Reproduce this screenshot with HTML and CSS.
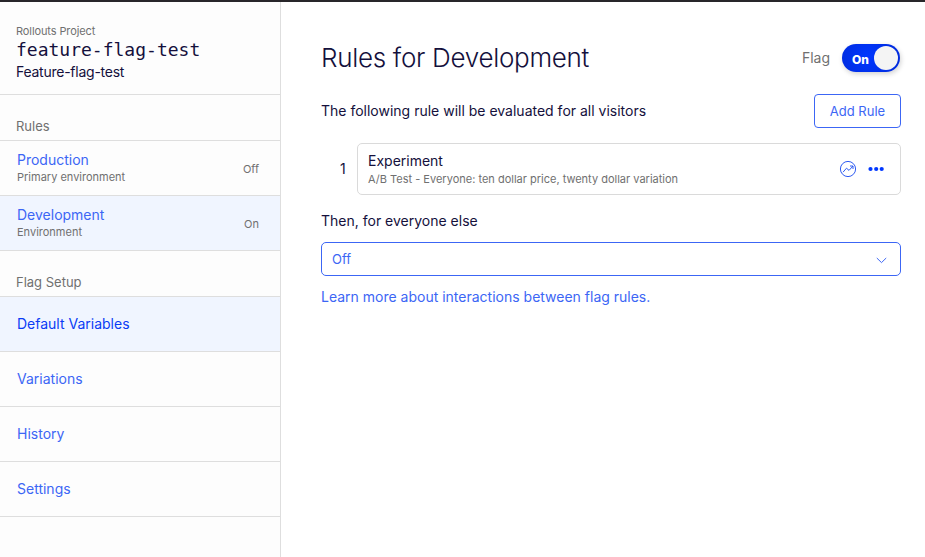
FILE: index.html
```html
<!DOCTYPE html>
<html lang="en">
<head>
<meta charset="utf-8">
<title>Rules for Development</title>
<link rel="stylesheet" href="styles.css">
</head>
<body>
<div class="app">
  <aside class="sidebar">
    <header class="project">
      <div class="project-label">Rollouts Project</div>
      <div class="flag-key">feature-flag-test</div>
      <div class="flag-name">Feature-flag-test</div>
    </header>
    <h2 class="section section-rules">Rules</h2>
    <a class="row">
      <span class="env"><span class="env-name">Production</span><span class="env-note note-primary">Primary environment</span></span>
      <span class="state">Off</span>
    </a>
    <a class="row selected">
      <span class="env"><span class="env-name env-dev">Development</span><span class="env-note">Environment</span></span>
      <span class="state">On</span>
    </a>
    <h2 class="section">Flag Setup</h2>
    <a class="row selected current"><span class="item-defaults">Default Variables</span></a>
    <a class="row"><span>Variations</span></a>
    <a class="row"><span>History</span></a>
    <a class="row"><span>Settings</span></a>
  </aside>
  <main class="main">
    <div class="title-bar">
      <h1><span class="title">Rules for Development</span></h1>
      <span class="toggle-label">Flag</span>
      <span class="toggle"><span class="toggle-text">On</span><span class="knob"></span></span>
    </div>
    <div class="intro">
      <span class="intro-text">The following rule will be evaluated for all visitors</span>
      <button class="add">Add Rule</button>
    </div>
    <div class="rule">
      <span class="number">1</span>
      <div class="card">
        <div class="card-text">
          <div class="card-title"><span>Experiment</span></div>
          <div class="card-note"><span>A/B Test - Everyone: ten dollar price, twenty dollar variation</span></div>
        </div>
        <svg class="results" width="18" height="18" viewBox="0 0 18 18" fill="none" stroke="#2f5cf2">
          <circle cx="9" cy="9" r="7.6"/>
          <path d="M4 12.2 7.5 8.2 10 10.4 14 6M11 6h3v3"/>
        </svg>
        <svg class="more" width="16" height="6" viewBox="0 0 16 6" fill="#0037ff">
          <circle cx="2.5" cy="3" r="2.1"/><circle cx="8.2" cy="3" r="2.1"/><circle cx="13.7" cy="3" r="2.1"/>
        </svg>
      </div>
    </div>
    <div class="else"><span>Then, for everyone else</span></div>
    <div class="select">
      <span>Off</span>
      <svg width="11" height="7" viewBox="0 0 11 7" fill="none" stroke="#3c66f5"><path d="M.8 1 5.5 5.6 10.2 1"/></svg>
    </div>
    <a class="learn"><span>Learn more about interactions between flag rules.</span></a>
  </main>
</div>
</body>
</html>
```
FILE: styles.css
```css
* { box-sizing: border-box; }

body {
  margin: 0;
  background: #fff;
  color: #14103c;
  font: 14px/20px Inter, "Liberation Sans", sans-serif;
}

.app {
  display: flex;
  height: 557px;
  border-top: 2px solid #28262a;
  overflow: hidden;
}

.sidebar {
  width: 281px;
  flex: none;
  background: #fdfdfd;
  border-right: 1px solid #dedede;
}

.project {
  height: 93px;
  padding: 21px 16px 0;
  border-bottom: 1px solid #dedede;
}

.project-label { font-size: 11px; line-height: 16px; color: #707070; letter-spacing: -.1px; }
.flag-key { font: 18px/22px "DejaVu Sans Mono", monospace; }
.flag-name { font-size: 14px; line-height: 22px; letter-spacing: -.25px; }

.section {
  margin: 0;
  height: 46px;
  padding: 21px 16px 0;
  border-bottom: 1px solid #dedede;
  color: #707070;
  font-size: 13px;
  font-weight: 400;
  line-height: 20px;
}

.row {
  display: flex;
  align-items: center;
  justify-content: space-between;
  height: 55px;
  padding: 0 21px 0 17px;
  border-bottom: 1px solid #dedede;
  color: #3c66f5;
}

.selected { background: #f0f5ff; }
.current { color: #0a3cf5; }
.env { display: flex; flex-direction: column; }
.env-name { line-height: 18px; }
.env-note { font-size: 11px; line-height: 16px; color: #707070; }
.state { font-size: 11px; color: #707070; padding-top: 2px; }

.main { flex: 1; padding: 38px 24px 0 40px; }

.title-bar { display: flex; align-items: center; height: 36px; }
h1 { flex: 1; margin: 0; font-size: 26px; line-height: 36px; font-weight: 300; letter-spacing: -.3px; }
.toggle-label { color: #707070; margin-right: 12px; }

.toggle {
  display: flex;
  align-items: center;
  justify-content: space-between;
  width: 58px;
  height: 28px;
  margin-right: 1px;
  padding: 0 2px 0 10px;
  border-radius: 14px;
  background: radial-gradient(circle at 45% 45%, #0037ff, #0029d9);
  box-shadow: 1px 2px 5px rgba(0, 0, 0, .18);
  color: #fff;
  font-size: 12px;
  font-weight: 800;
}

.toggle-text { padding-top: 4px; }
.knob { width: 24px; height: 24px; border-radius: 50%; background: #f4f4f4; }

.intro { display: flex; align-items: center; justify-content: space-between; height: 34px; margin-top: 18px; }

.add {
  width: 87px;
  height: 34px;
  padding: 0;
  border: 1px solid #3c66f5;
  border-radius: 4px;
  background: #fff;
  color: #3c66f5;
  font: 13px/20px Inter, sans-serif;
}

.rule { display: flex; align-items: center; margin-top: 15px; }
.number { width: 36px; padding-left: 19px; }

.card {
  display: flex;
  align-items: center;
  flex: 1;
  height: 52px;
  padding: 0 16px 0 10px;
  border: 1px solid #dadada;
  border-radius: 5px;
}

.card-text { flex: 1; }
.card-title { line-height: 18px; }
.card-note { margin-top: 1px; font-size: 11px; line-height: 16px; color: #707070; }
.results { margin-right: 11px; }

.else { margin-top: 16px; }

.select {
  display: flex;
  align-items: center;
  justify-content: space-between;
  height: 34px;
  margin-top: 11px;
  padding: 0 13px 0 10px;
  border: 1px solid #3c66f5;
  border-radius: 5px;
  color: #3c66f5;
  font-size: 13px;
}

.select svg { margin-top: 3px; }
.learn { display: block; margin-top: 11px; color: #3c66f5; }
```
